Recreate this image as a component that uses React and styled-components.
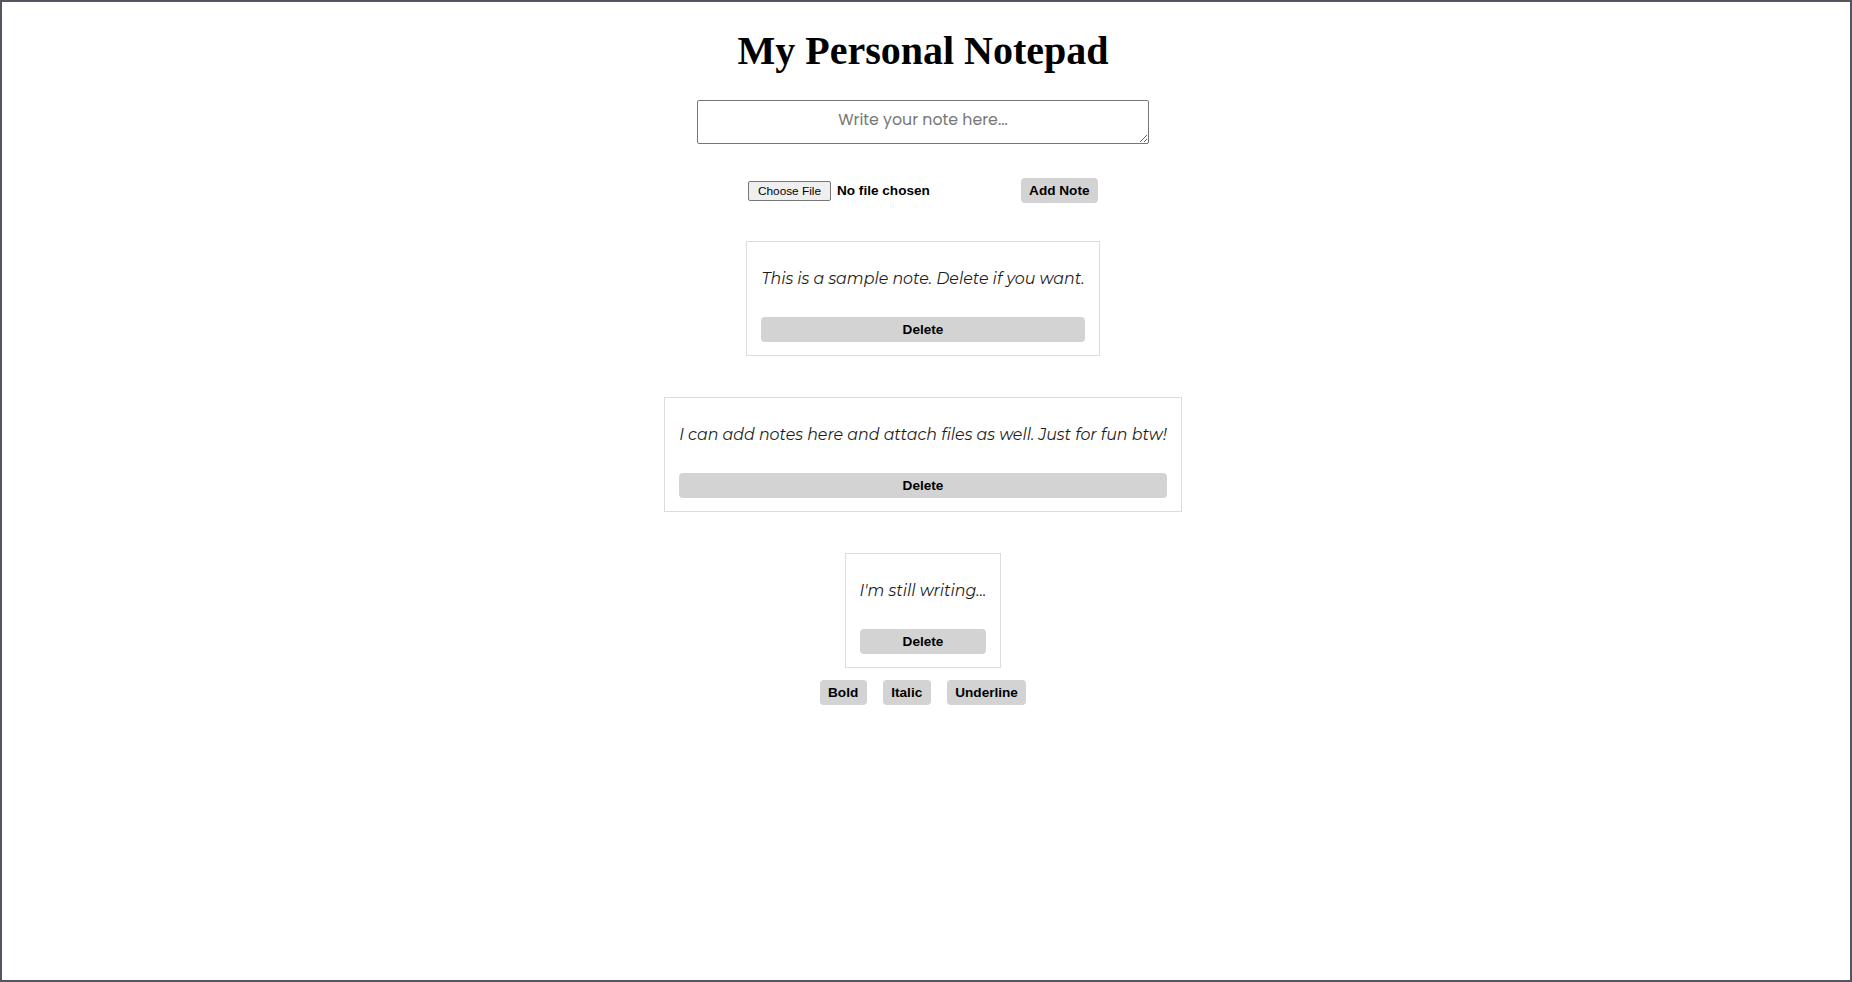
import React, { useState } from 'react'
import styled, { createGlobalStyle } from 'styled-components'

const GlobalStyle = createGlobalStyle`
    html, body {
        margin: 0;
        padding: 0;
        background: #fff;
    }
    body {
        font-family: "Liberation Sans", Arial, sans-serif;
    }
`

const Frame = styled.div`
    width: 1852px;
    height: 982px;
    box-sizing: border-box;
    border: 2px solid #56545e;
    padding: 26px 6px 0 0;
    display: flex;
    flex-direction: column;
    align-items: center;
`

const Title = styled.h1`
    margin: 0;
    font-family: "Liberation Serif", "Times New Roman", serif;
    font-weight: 700;
    font-size: 40px;
    line-height: 46px;
    color: #000;
`

const NoteInput = styled.textarea`
    margin-top: 26px;
    width: 452px;
    height: 44px;
    box-sizing: border-box;
    padding: 6px;
    border: 1px solid #767676;
    border-radius: 2px;
    font-family: Poppins, "DejaVu Sans", sans-serif;
    font-size: 15.8px;
    text-align: center;
    color: #222;

    &::placeholder {
        color: #777;
    }
`

const Toolbar = styled.div`
    margin-top: 34px;
    width: 350px;
    display: flex;
    justify-content: space-between;
    align-items: center;
`

const FileInput = styled.input`
    width: 255px;
    font-family: "Liberation Sans", Arial, sans-serif;
    font-weight: 700;
    font-size: 13.6px;
    color: #000;

    &::file-selector-button {
        height: 20px;
        padding: 0 9px;
        margin-right: 6px;
        border: 1px solid #767676;
        border-radius: 2px;
        background: #efefef;
        color: #000;
        font-family: "Liberation Sans", Arial, sans-serif;
        font-weight: 400;
        font-size: 11.8px;
    }
`

const Button = styled.button`
    height: 25px;
    padding: 0 8.5px;
    border: none;
    border-radius: 4px;
    background: #d3d3d3;
    color: #000;
    font-family: "Liberation Sans", Arial, sans-serif;
    font-weight: 700;
    font-size: 13.6px;
    cursor: pointer;
    width: ${props => props.$full ? '100%' : 'auto'};
`

const NoteList = styled.ul`
    list-style: none;
    margin: 38px 0 0;
    padding: 0;
    display: flex;
    flex-direction: column;
    align-items: center;
    gap: 41px;
`

const NoteCard = styled.li`
    border: 1px solid #dcdcdc;
    padding: 14px 14px 13px;
    display: flex;
    flex-direction: column;
`

const NoteText = styled.p`
    margin: 14px 0 29px;
    font-family: Montserrat, "DejaVu Sans", sans-serif;
    font-style: italic;
    font-size: 15.85px;
    line-height: 18px;
    color: #1c1c1c;
    text-align: center;
    white-space: nowrap;
`

const FormatBar = styled.div`
    margin-top: 12px;
    display: flex;
    gap: 16px;
`

function App () {

    const [notes, setNotes] = useState([
        { id: 1, text: 'This is a sample note. Delete if you want.' },
        { id: 2, text: 'I can add notes here and attach files as well. Just for fun btw!' },
        { id: 3, text: "I'm still writing..." }
    ])
    const [draft, setDraft] = useState('')

    const addNote = () => {
        if (!draft.trim()) return
        setNotes([...notes, { id: Date.now(), text: draft }])
        setDraft('')
    }

    const deleteNote = id => setNotes(notes.filter(n => n.id !== id))

    return (
        <>
            <GlobalStyle />
            <Frame>
                <Title>My Personal Notepad</Title>
                <NoteInput
                    placeholder="Write your note here..."
                    value={draft}
                    onChange={e => setDraft(e.target.value)}
                />
                <Toolbar>
                    <FileInput type="file" />
                    <Button onClick={addNote}>Add Note</Button>
                </Toolbar>
                <NoteList>
                {
                    notes.map(note =>
                        <NoteCard key={note.id}>
                            <NoteText>{note.text}</NoteText>
                            <Button $full onClick={() => deleteNote(note.id)}>Delete</Button>
                        </NoteCard>
                    )
                }
                </NoteList>
                <FormatBar>
                    <Button>Bold</Button>
                    <Button>Italic</Button>
                    <Button>Underline</Button>
                </FormatBar>
            </Frame>
        </>
    )
}

export default App
